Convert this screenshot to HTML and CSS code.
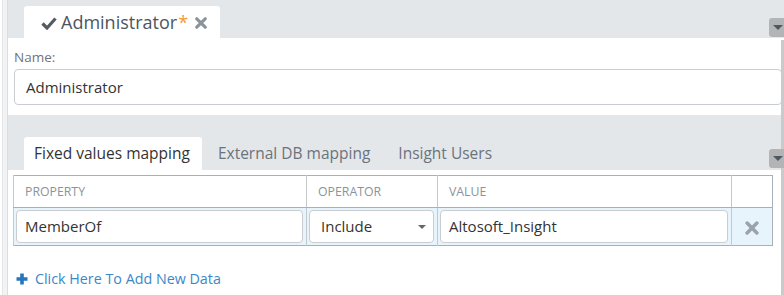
FILE: index.html
```html
<!DOCTYPE html>
<html lang="en">
<head>
    <meta charset="UTF-8">
    <title>Administrator</title>
    <link rel="stylesheet" href="styles.css">
</head>
<body>
    <div class="page">
        <div class="side-edge"></div>
        <div class="main">
            <div class="doc-tabs">
                <div class="doc-tab">
                    <svg class="check" width="16" height="14" viewBox="0 0 16 14">
                        <path d="M1.5 7.5 L6 12 L14.5 2.5" fill="none" stroke="#555b62" stroke-width="3.2"/>
                    </svg>
                    <span class="doc-title">Administrator</span><span class="dirty">*</span>
                    <svg class="close" width="12" height="12" viewBox="0 0 12 12">
                        <path d="M1.8 1.8 L10.2 10.2 M10.2 1.8 L1.8 10.2" stroke="#8b939c" stroke-width="3.2" stroke-linecap="round"/>
                    </svg>
                </div>
            </div>

            <div class="name-panel">
                <label class="field-label" for="name">Name:</label>
                <div class="text-box" id="name">Administrator</div>
            </div>

            <div class="sub-tabs">
                <div class="sub-tab active">Fixed values mapping</div>
                <div class="sub-tab">External DB mapping</div>
                <div class="sub-tab">Insight Users</div>
            </div>

            <div class="grid-panel">
                <table class="grid">
                    <thead>
                        <tr>
                            <th class="col-prop">Property</th>
                            <th class="col-op">Operator</th>
                            <th class="col-val">Value</th>
                            <th class="col-act"></th>
                        </tr>
                    </thead>
                    <tbody>
                        <tr>
                            <td><div class="cell-box">MemberOf</div></td>
                            <td><div class="cell-box select">Include <span class="caret"></span></div></td>
                            <td><div class="cell-box">Altosoft_Insight</div></td>
                            <td class="remove">
                                <svg width="14" height="14" viewBox="0 0 12 12">
                                    <path d="M1.8 1.8 L10.2 10.2 M10.2 1.8 L1.8 10.2" stroke="#9ba3aa" stroke-width="3" stroke-linecap="round"/>
                                </svg>
                            </td>
                        </tr>
                    </tbody>
                </table>

                <a class="add-link" href="#">
                    <svg class="plus" width="12" height="12" viewBox="0 0 12 12">
                        <path d="M6 0.5 V11.5 M0.5 6 H11.5" stroke="#2576bd" stroke-width="3.6"/>
                    </svg>
                    Click Here To Add New Data
                </a>
            </div>
        </div>

        <!-- scroll strip and collapse buttons sit over the right edge -->
        <div class="scroll-strip"></div>
        <div class="collapse-btn top"><span class="caret dark"></span></div>
        <div class="collapse-btn mid"><span class="caret dark"></span></div>
    </div>
</body>
</html>
```

FILE: styles.css
```css
* {
    margin: 0;
    padding: 0;
    box-sizing: border-box;
}

body {
    font-family: 'Open Sans', 'Liberation Sans', sans-serif;
    color: #333;
    background-color: #fff;
    width: 784px;
    height: 295px;
    overflow: hidden;
}

.page {
    position: relative;
    display: flex;
    height: 295px;
}

.side-edge {
    width: 6px;
    margin-left: 2px;
    border-left: 1px solid #e3e5e7;
    border-right: 1px solid #dadde0;
    background-color: #f2f3f5;
    flex-shrink: 0;
}

.main {
    flex: 1;
    display: flex;
    flex-direction: column;
}

/* document tab strip */
.doc-tabs {
    height: 38px;
    background-color: #e4e7ea;
    padding: 6px 0 0 16px;
    display: flex;
}

.doc-tab {
    width: 196px;
    background-color: #fff;
    border-radius: 3px 3px 0 0;
    display: flex;
    align-items: center;
    padding-left: 17px;
    color: #4d5561;
    font-size: 18px;
}

.check {
    margin-right: 4px;
    margin-top: 1px;
}

.dirty {
    color: #f29a38;
    font-size: 18px;
    margin-left: 1px;
}

.close {
    margin-left: 7px;
    margin-top: 1px;
}

/* name field */
.name-panel {
    height: 77px;
    padding: 9px 2px 0 6px;
}

.field-label {
    display: block;
    font-size: 13.5px;
    color: #6f747a;
    line-height: 20px;
    margin-bottom: 2px;
}

.text-box {
    height: 36px;
    border: 1px solid #c9cdd1;
    border-radius: 4px;
    padding: 0 11px;
    font-size: 15px;
    line-height: 34px;
    color: #333;
}

/* inner tabs */
.sub-tabs {
    height: 55px;
    background-color: #e4e7ea;
    padding: 22px 0 0 16px;
    display: flex;
}

.sub-tab {
    height: 33px;
    line-height: 33px;
    padding: 0 12px 0 16px;
    font-size: 15.5px;
    color: #6b737c;
}

.sub-tab.active {
    background-color: #fff;
    color: #333;
    border-radius: 3px 3px 0 0;
    padding: 0 12px 0 10px;
}

/* grid */
.grid-panel {
    flex: 1;
    padding: 5px 0 0 5px;
}

.grid {
    width: 760px;
    border-collapse: collapse;
    border: 1px solid #a9b1b8;
}

.grid th {
    height: 32px;
    text-align: left;
    font-size: 12.3px;
    font-weight: normal;
    text-transform: uppercase;
    color: #8a939c;
    padding-left: 11px;
    border-left: 1px solid #c4c9ce;
    border-bottom: 1px solid #a9b1b8;
}

.col-prop { width: 293px; }
.col-op { width: 131px; }
.col-val { width: 294px; }

.grid td {
    height: 38px;
    background-color: #e8f4fb;
    border-left: 1px solid #c4c9ce;
    padding: 2px 3px 2px 2px;
}

.cell-box {
    height: 33px;
    background-color: #fff;
    border: 1px solid #c9cdd1;
    border-radius: 4px;
    padding: 0 8px;
    font-size: 15px;
    line-height: 31px;
    color: #333;
}

.cell-box.select {
    display: flex;
    justify-content: space-between;
    align-items: center;
    padding: 0 7px 0 11px;
}

.caret {
    width: 0;
    height: 0;
    border-left: 4px solid transparent;
    border-right: 4px solid transparent;
    border-top: 4px solid #666;
}

.grid td.remove {
    text-align: center;
    padding: 4px 0 0 0;
}

.add-link {
    display: inline-flex;
    align-items: center;
    margin: 23px 0 0 3px;
    font-size: 14.3px;
    color: #3b87c7;
    text-decoration: none;
}

.plus {
    margin-right: 7px;
}

/* right edge overlays */
.scroll-strip {
    position: absolute;
    top: 40px;
    right: 0;
    width: 3px;
    height: 255px;
    background-color: #c8cacc;
}

.collapse-btn {
    position: absolute;
    right: 0;
    width: 15px;
    height: 19px;
    background-color: #b2b4b6;
    border-radius: 3px 0 0 3px;
    display: flex;
    justify-content: flex-end;
    align-items: center;
    padding-right: 1px;
}

.collapse-btn.top { top: 18px; }
.collapse-btn.mid { top: 149px; }

.caret.dark {
    border-top-color: #4e5863;
    border-left-width: 5px;
    border-right-width: 5px;
    border-top-width: 5px;
}
```
